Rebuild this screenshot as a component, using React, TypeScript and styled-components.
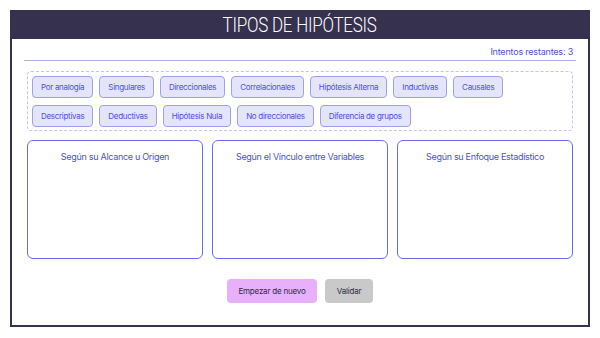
import React from "react";
import styled, { createGlobalStyle } from "styled-components";

const Global = createGlobalStyle`
  html, body { margin: 0; padding: 0; background: #ffffff; }
  * { box-sizing: border-box; }
`;

const Frame = styled.div`
  margin: 10px 0 0 10px;
  width: 580px;
  height: 317px;
  border: 2px solid #36314f;
  border-top: none;
  display: flex;
  flex-direction: column;
  font-family: Inter, "Liberation Sans", sans-serif;
`;

const Header = styled.div`
  height: 29px;
  margin: 0 -2px;
  background: #36314f;
  display: flex;
  align-items: center;
  justify-content: center;
`;

const Title = styled.span`
  display: inline-block;
  color: #ffffff;
  font-family: Roboto, "Liberation Sans", sans-serif;
  font-weight: 300;
  font-size: 20px;
  letter-spacing: -0.3px;
  transform: scaleX(0.85);
`;

const Body = styled.div`
  flex: 1;
  display: flex;
  flex-direction: column;
  padding: 0 15px;
`;

const Attempts = styled.div`
  padding-top: 7px;
  height: 22px;
  text-align: right;
  font-size: 9px;
  letter-spacing: -0.2px;
  color: #4b50e0;
  border-bottom: 1px solid #aab0e2;
  margin: 0 -3px;
  padding-right: 3px;
`;

const Pool = styled.div`
  margin-top: 10px;
  height: 60px;
  border: 1px dashed #c4c6e8;
  border-radius: 4px;
  padding: 4px 4px;
  display: flex;
  flex-wrap: wrap;
  align-content: flex-start;
  gap: 7px 6px;
`;

const Chip = styled.div`
  height: 22px;
  padding: 0 8px;
  display: flex;
  align-items: center;
  background: #e4e4fb;
  border: 1px solid #9fa2ea;
  border-radius: 4px;
  color: #4b50e0;
  font-size: 8px;
  letter-spacing: -0.3px;
  white-space: nowrap;
`;

const Columns = styled.div`
  margin-top: 9px;
  display: grid;
  grid-template-columns: repeat(3, 1fr);
  gap: 9px;
`;

const Column = styled.div`
  height: 119px;
  border: 1px solid #6a6ee0;
  border-radius: 6px;
  padding-top: 10px;
  text-align: center;
  font-size: 9px;
  letter-spacing: -0.3px;
  color: #4b50e0;
`;

const Actions = styled.div`
  margin-top: 20px;
  display: flex;
  justify-content: center;
  gap: 8px;
`;

const Button = styled.div<{ $bg: string; $w: number }>`
  width: ${(p) => p.$w}px;
  height: 24px;
  border-radius: 4px;
  background: ${(p) => p.$bg};
  display: flex;
  align-items: center;
  justify-content: center;
  font-size: 8px;
  letter-spacing: -0.2px;
  color: #2e2a44;
`;

const row = [
  "Por analogía",
  "Singulares",
  "Direccionales",
  "Correlacionales",
  "Hipótesis Alterna",
  "Inductivas",
  "Causales",
  "Descriptivas",
  "Deductivas",
  "Hipótesis Nula",
  "No direccionales",
  "Diferencia de grupos",
];

const cols = [
  "Según su Alcance u Origen",
  "Según el Vínculo entre Variables",
  "Según su Enfoque Estadístico",
];

export default function App() {
  return (
    <>
      <Global />
      <Frame>
        <Header>
          <Title>TIPOS DE HIPÓTESIS</Title>
        </Header>
        <Body>
          <Attempts>Intentos restantes: 3</Attempts>
          <Pool>
            {row.map((r) => (
              <Chip key={r}>{r}</Chip>
            ))}
          </Pool>
          <Columns>
            {cols.map((c) => (
              <Column key={c}>{c}</Column>
            ))}
          </Columns>
          <Actions>
            <Button $bg="#e8b0fb" $w={90}>Empezar de nuevo</Button>
            <Button $bg="#c9c9c9" $w={48}>Validar</Button>
          </Actions>
        </Body>
      </Frame>
    </>
  );
}
